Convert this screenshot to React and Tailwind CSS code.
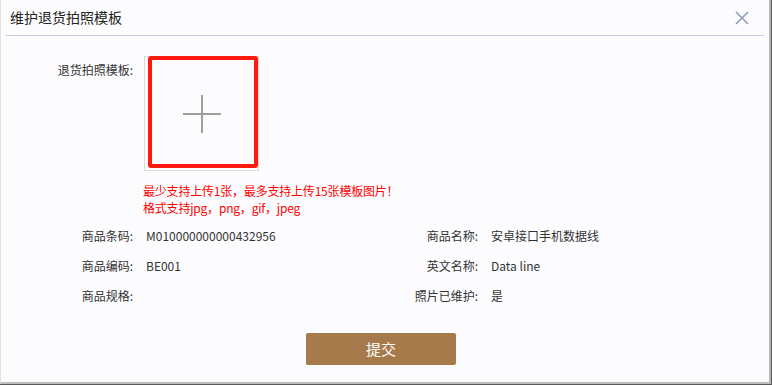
import React from 'react';

const font = { fontFamily: '"Microsoft YaHei", "Noto Sans CJK SC", "Noto Sans", sans-serif' };

const rows = [
    [{ label: '商品条码:', value: 'M010000000000432956' }, { label: '商品名称:', value: '安卓接口手机数据线' }],
    [{ label: '商品编码:', value: 'BE001' }, { label: '英文名称:', value: 'Data line' }],
    [{ label: '商品规格:', value: '' }, { label: '照片已维护:', value: '是' }],
];

const Field = ({ label, value }) => (
    <div className="flex items-center h-[30px]">
        <div className="w-[132px] text-right">{label}</div>
        <div className="ml-[13px]">{value}</div>
    </div>
);

export default function App() {
    return (
        <div className="w-[772px] h-[385px] bg-[#5a5a5a] flex" style={font}>
            <div className="w-[771px] h-[384px] bg-[#fcfcfe] border-l border-l-[#e2e2e2] border-r-2 border-r-[#b4b4b4] border-b-2 border-b-[#bdbdbd] flex flex-col text-[12px] text-[#333]">
                {/* Header */}
                <div className="h-[36px] mx-[5px] border-b border-[#cacae6] flex items-center justify-between">
                    <span className="pl-[4px] text-[14px] text-[#222]">维护退货拍照模板</span>
                    <svg width="14" height="14" viewBox="0 0 14 14" className="mr-[15px]">
                        <path d="M1 1 L13 13 M13 1 L1 13" stroke="#8d9cbd" strokeWidth="1.6" fill="none" />
                    </svg>
                </div>

                {/* Upload row */}
                <div className="flex mt-[20px]">
                    <div className="w-[132px] text-right pt-[5px]">退货拍照模板:</div>
                    <div className="ml-[11px] relative w-[115px] h-[115px] border border-[#dcdcdc] flex items-center justify-center">
                        <svg width="40" height="40" viewBox="0 0 40 40">
                            <path d="M20 1 V39 M1 20 H39" stroke="#9e9e9e" strokeWidth="2" fill="none" />
                        </svg>
                        <div className="absolute left-[3px] -top-[1px] w-[110px] h-[112px] border-[4px] border-[#ff1a0f] rounded-[3px]" />
                    </div>
                </div>

                <div className="ml-[142px] mt-[11px] text-[#ff0000] leading-[17px] tracking-[-0.2px]">
                    <div>最少支持上传1张，最多支持上传15张模板图片！</div>
                    <div>格式支持jpg，png，gif，jpeg</div>
                </div>

                {/* Info */}
                <div className="mt-[5px]">
                    {rows.map((r, i) => (
                        <div key={i} className="grid grid-cols-[345px_1fr]">
                            <Field {...r[0]} />
                            <Field label={r[1].label} value={r[1].value} />
                        </div>
                    ))}
                </div>

                <div className="flex mt-[22px]">
                    <button className="ml-[305px] w-[150px] h-[32px] bg-[#a67a4b] text-white text-[15px] rounded-[2px]">提交</button>
                </div>
            </div>
        </div>
    );
}
